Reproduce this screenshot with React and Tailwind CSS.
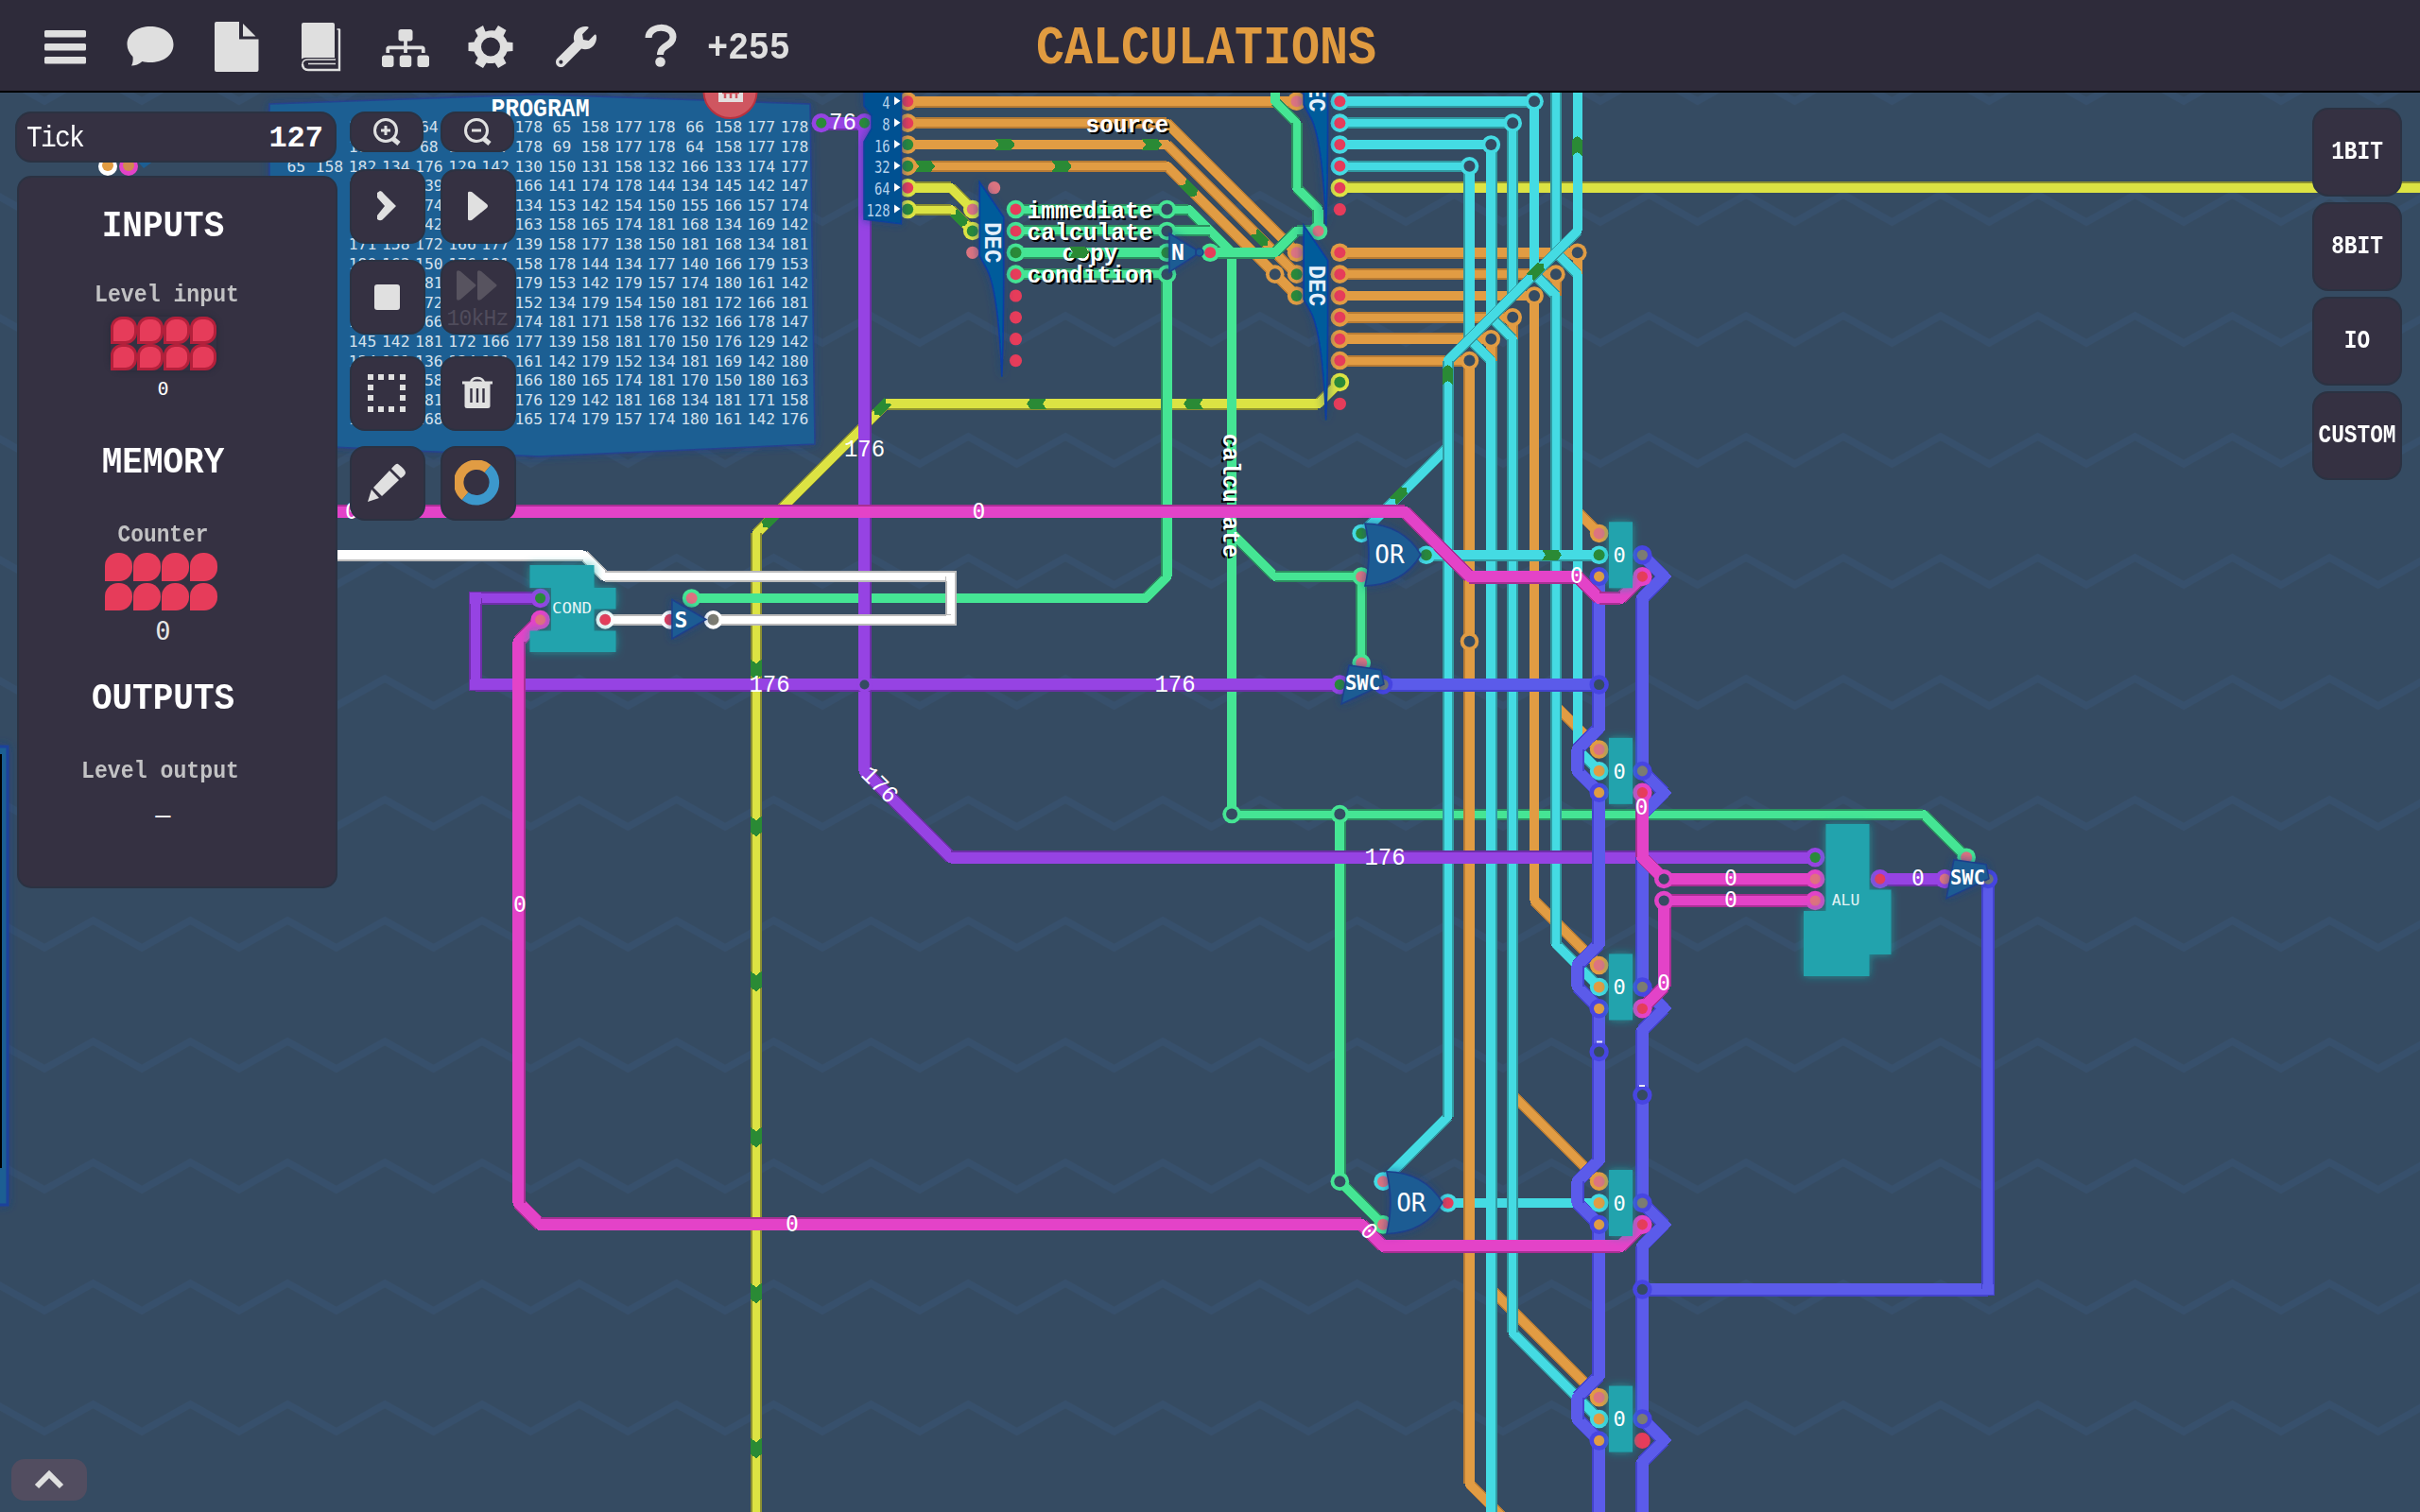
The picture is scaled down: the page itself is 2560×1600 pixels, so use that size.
import React from "react";
import { FaWrench, FaSitemap } from "react-icons/fa";

const U = 160 / 7;
const X = (g) => g * U + 0.2;
const Y = (g) => g * U - 7;

const C = {
  cyan: ["#44dbe3", "#319ba2"],
  orange: ["#e19c43", "#b87c35"],
  green: ["#45e594", "#2c8f60"],
  yellow: ["#dce343", "#8c9031"],
  pink: ["#e343c8", "#a72f93"],
  purple: ["#9643e3", "#6e2fa8"],
  indigo: ["#5b5bea", "#4343cc"],
  white: ["#ffffff", "#bbbbbb"],
};
const RING = { ...Object.fromEntries(Object.entries(C).map(([k, v]) => [k, v[0]])), indigo: "#4745e2" };
const CORE = { red: "#e63c5a", on: "#2a8a38", hole: "#354b62", in: "#dc7480", amber: "#e19c43", off: "#7c7c72", salmon: "#e07080" };
const BYTE = ["pink", "purple", "indigo"];

/* One straight run, with its edges snapped to a two pixel raster. */
function Run({ a, b, color, hf, hb }) {
  const vertical = a[0] === b[0];
  const c = vertical ? X(a[0]) : Y(a[1]);
  const s = vertical ? Y(Math.min(a[1], b[1])) : X(Math.min(a[0], b[0]));
  const e = vertical ? Y(Math.max(a[1], b[1])) : X(Math.max(a[0], b[0]));
  const strips = [];
  for (let p = 2 * Math.floor((c - hf) / 2) - 1; p <= c + hf; p += 2) {
    const d = Math.abs(p - c);
    if (d > hf) continue;
    const fill = d < hb ? C[color][0] : C[color][1];
    strips.push(
      vertical ? (
        <rect key={p} x={p - 1} y={s} width={2} height={e - s} fill={fill} />
      ) : (
        <rect key={p} x={s} y={p - 1} width={e - s} height={2} fill={fill} />
      )
    );
  }
  return <>{strips}</>;
}

const straight = (a, b) => a[0] === b[0] || a[1] === b[1];

function Wire({ c, p }) {
  const byte = BYTE.includes(c);
  const hf = byte ? 7 : 5.75;
  const hb = byte ? 5.9 : 4.55;
  const pts = p.map(([x, y]) => `${X(x)},${Y(y)}`).join(" ");
  const segs = p.slice(1).map((b, i) => [p[i], b]);
  const corners = p.slice(1, -1).filter((q, i) => straight(p[i], q) && straight(q, p[i + 2]));
  return (
    <g shapeRendering="crispEdges" fill="none" strokeMiterlimit="10">
      {segs
        .filter(([a, b]) => !straight(a, b))
        .map(([a, b], i) => (
          <line key={i} x1={X(a[0])} y1={Y(a[1])} x2={X(b[0])} y2={Y(b[1])} stroke={C[c][1]} strokeWidth={hf * 2} />
        ))}
      {corners.map(([x, y], i) => (
        <rect key={i} x={X(x) - hf} y={Y(y) - hf} width={hf * 2} height={hf * 2} fill={C[c][1]} />
      ))}
      <polyline points={pts} stroke={C[c][0]} strokeWidth={hb * 2} />
      {segs
        .filter(([a, b]) => straight(a, b))
        .map(([a, b], i) => (
          <Run key={i} a={a} b={b} color={c} hf={hf} hb={hb} />
        ))}
      {corners.map(([x, y], i) => (
        <rect key={i} x={X(x) - hb} y={Y(y) - hb} width={hb * 2} height={hb * 2} fill={C[c][0]} />
      ))}
    </g>
  );
}

const Ring = ({ c, k, x, y }) => (
  <g>
    <circle cx={X(x)} cy={Y(y)} r={BYTE.includes(c) ? 10.2 : 9.8} fill={RING[c]} />
    <circle cx={X(x)} cy={Y(y)} r={BYTE.includes(c) ? 5.6 : 6} fill={CORE[k]} />
  </g>
);
const Pin = ({ k, x, y, r = 6.6 }) => <circle cx={X(x)} cy={Y(y)} r={r} fill={CORE[k]} />;

const Pulse = ({ x, y, r = 0, w = 6 }) => (
  <path
    shapeRendering="crispEdges"
    d={`M-10,${-w} L7,${-w} L11,0 L7,${w} L-10,${w} L-6,0 Z`}
    fill="#2a8a35"
    transform={`translate(${x} ${y}) rotate(${r})`}
  />
);

function Txt({ x, y, s = 24, r = 0, w = 400, fill = "#fff", shadow, len, anchor = "middle", slab, children }) {
  return (
    <g transform={`translate(${x} ${y}) rotate(${r})${slab ? " scale(1 1.08)" : ""}`}>
      <text
        fontFamily={slab ? "'Liberation Mono', monospace" : "'DejaVu Sans Mono', monospace"}
        fontSize={s}
        fontWeight={w}
        textAnchor={anchor}
        y={s * (slab ? 0.33 : 0.36)}
        textLength={len}
        lengthAdjust={len ? "spacingAndGlyphs" : undefined}
        fill={fill}
        style={shadow ? { textShadow: "2px 2px 0 #000" } : undefined}
      >
        {children}
      </text>
    </g>
  );
}

const bitWires = [
  ["yellow", [[62, 9], [112, 9]]],
  ["yellow", [[62, 18], [61, 19], [41, 19], [35, 25], [35, 71]]],
  ["yellow", [[42, 9], [44, 9], [45, 10]]],
  ["yellow", [[42, 10], [44, 10], [45, 11]]],
  ["orange", [[42, 5], [60, 5]]],
  ["orange", [[42, 6], [54, 6], [60, 12]]],
  ["orange", [[42, 7], [54, 7], [60, 13]]],
  ["orange", [[42, 8], [54, 8], [60, 14]]],
  ["green", [[62, 38], [89, 38], [91, 40]]],
  ["green", [[54, 13], [54, 27], [53, 28], [32, 28]]],
  ["orange", [[62, 12], [73, 12], [73, 24], [74, 25]]],
  ["orange", [[62, 13], [72, 13], [72, 33], [74, 35]]],
  ["orange", [[62, 15], [70, 15], [70, 51], [74, 55]]],
  ["orange", [[62, 16], [69, 16], [69, 60], [74, 65]]],
  ["cyan", [[67, 56], [74, 56]]],
  ["orange", [[62, 14], [71, 14], [71, 42], [74, 45]]],
  ["orange", [[62, 17], [68, 17], [68, 69], [72, 73]]],
  ["cyan", [[62, 5], [71, 5]]],
  ["cyan", [[62, 6], [70, 6]]],
  ["cyan", [[62, 7], [69, 7]]],
  ["cyan", [[62, 8], [68, 8]]],
  ["cyan", [[68, 8], [68, 16], [69, 17], [69, 72]]],
  ["cyan", [[69, 7], [69, 15], [70, 16], [70, 62], [74, 66]]],
  ["cyan", [[70, 6], [70, 14]]],
  ["cyan", [[71, 5], [71, 13], [72, 14], [72, 44], [74, 46]]],
  ["cyan", [[72, 4], [72, 12], [73, 13], [73, 35], [74, 36]]],
  ["cyan", [[67, 21], [63, 25]]],
  ["cyan", [[73, 4], [73, 11], [67, 17], [67, 52], [64, 55]]],
  ["cyan", [[66, 26], [74, 26]]],
  ["green", [[47, 10], [55, 10], [57, 12]]],
  ["green", [[47, 11], [56, 11], [57, 12]]],
  ["green", [[47, 12], [54, 12]]],
  ["green", [[47, 13], [54, 13]]],
  ["green", [[59, 4], [59, 5], [60, 6], [60, 9], [61, 10], [61, 11]]],
  ["green", [[57, 25], [59, 27], [63, 27], [63, 31]]],
  ["green", [[57, 12], [57, 38], [62, 38]]],
  ["green", [[56, 12], [59, 12], [60, 11], [61, 11]]],
  ["green", [[62, 38], [62, 55], [64, 57]]],
];

const byteWires = [
  ["purple", [[38, 6], [40, 6], [40, 36], [44, 40], [84, 40]]],
  ["purple", [[25, 28], [22, 28], [22, 32], [62, 32]]],
  ["white", [[9, 26], [27, 26], [28, 27], [44, 27], [44, 29], [33, 29]]],
  ["white", [[28, 29], [31, 29]]],
  ["indigo", [[64, 32], [74, 32]]],
  ["indigo", [[74, 27], [74, 34], [73, 35], [73, 36], [74, 37], [74, 44], [73, 45], [73, 46], [74, 47], [74, 54], [73, 55], [73, 56], [74, 57], [74, 64], [73, 65], [73, 66], [74, 67], [74, 72]]],
  ["indigo", [[76, 26], [77, 27], [76, 28], [76, 36], [77, 37], [76, 38], [76, 46], [77, 47], [76, 48], [76, 56], [77, 57], [76, 58], [76, 66], [77, 67], [76, 68], [76, 72]]],
  ["indigo", [[76, 60], [92, 60], [92, 41]]],
  ["purple", [[87, 41], [90, 41]]],
  ["pink", [[9, 24], [65, 24], [68, 27], [73, 27], [74, 28], [75, 28], [76, 27]]],
  ["pink", [[25, 29], [24, 30], [24, 56], [25, 57], [63, 57], [64, 58], [75, 58], [76, 57]]],
  ["pink", [[76, 37], [76, 40], [77, 41], [84, 41]]],
  ["pink", [[76, 47], [77, 46], [77, 42], [84, 42]]],
];

const rings = [
  ["orange", "red", 42, 5], ["orange", "red", 42, 6], ["orange", "on", 42, 7], ["orange", "on", 42, 8],
  ["yellow", "red", 42, 9], ["yellow", "on", 42, 10], ["yellow", "in", 45, 10], ["yellow", "on", 45, 11],
  ["green", "red", 47, 10], ["green", "red", 47, 11], ["green", "on", 47, 12], ["green", "red", 47, 13],
  ["green", "hole", 54, 10], ["green", "hole", 54, 11], ["green", "on", 54, 12], ["green", "hole", 54, 13],
  ["green", "red", 56, 12], ["orange", "in", 60, 5], ["orange", "in", 60, 12], ["orange", "on", 60, 13],
  ["orange", "on", 60, 14], ["orange", "hole", 59, 13], ["green", "in", 61, 11],
  ["cyan", "red", 62, 5], ["cyan", "red", 62, 6], ["cyan", "red", 62, 7], ["cyan", "red", 62, 8],
  ["yellow", "red", 62, 9], ["cyan", "hole", 71, 5], ["cyan", "hole", 70, 6], ["cyan", "hole", 69, 7], ["cyan", "hole", 68, 8],
  ["orange", "red", 62, 12], ["orange", "red", 62, 13], ["orange", "red", 62, 14], ["orange", "red", 62, 15],
  ["orange", "red", 62, 16], ["orange", "red", 62, 17], ["yellow", "on", 62, 18],
  ["orange", "hole", 73, 12], ["orange", "hole", 72, 13], ["orange", "hole", 71, 14], ["orange", "hole", 70, 15],
  ["orange", "hole", 69, 16], ["orange", "hole", 68, 17], ["orange", "hole", 68, 30],
  ["cyan", "on", 63, 25], ["green", "in", 63, 27], ["cyan", "on", 66, 26], ["green", "in", 63, 31],
  ["green", "hole", 57, 38], ["green", "hole", 62, 38], ["green", "hole", 62, 55], ["cyan", "in", 64, 55],
  ["green", "in", 64, 57], ["cyan", "red", 67, 56], ["green", "in", 91, 40], ["green", "salmon", 32, 28],
  ["purple", "on", 38, 6], ["purple", "on", 40, 6], ["purple", "on", 25, 28], ["pink", "salmon", 25, 29],
  ["purple", "on", 84, 40], ["pink", "salmon", 84, 41], ["pink", "salmon", 84, 42], ["pink", "hole", 77, 41], ["pink", "hole", 77, 42],
  ["purple", "red", 87, 41], ["purple", "in", 90, 41], ["purple", "on", 62, 32], ["indigo", "off", 64, 32], ["indigo", "off", 92, 41],
  ["white", "red", 28, 29], ["white", "red", 31, 29], ["white", "off", 33, 29],
  ["indigo", "hole", 74, 32], ["indigo", "hole", 74, 49], ["indigo", "hole", 76, 51], ["indigo", "hole", 76, 60],
  ["cyan", "on", 74, 26],
  ...[25, 35, 45, 55, 65].map((g) => ["orange", "in", 74, g]),
  ...[36, 46, 56, 66].map((g) => ["cyan", "amber", 74, g]),
  ...[27, 37, 47, 57, 67].map((g) => ["indigo", "amber", 74, g]),
  ...[26, 36, 46, 56, 66].map((g) => ["indigo", "off", 76, g]),
  ...[27, 37, 47, 57].map((g) => ["pink", "red", 76, g]),
];

const pins = [
  ["in", 46, 9], ["in", 45, 12], ["red", 47, 14], ["red", 47, 15], ["red", 47, 16], ["red", 47, 17],
  ["red", 62, 10], ["red", 62, 19],
];

const pulses = [
  [1062.7, 153], [1218, 153], [978, 176], [1122.7, 176], [1258, 199.5, 45], [1333, 252, 45],
  [1668.5, 155, -90], [1625, 287, -45], [1531.5, 397, -90], [1480, 524, -45], [1641, 587.3],
  [1097, 427.3, 180], [1263, 427.3, 180], [933, 431, 135], [815, 550, 135], [1015, 231, 45],
  [800, 708, 90], [800, 874, 90], [800, 1038, 90], [800, 1203, 90], [800, 1368, 90], [800, 1532, 90],
];

/* The first two columns show only in the gap between the overlays. */
const memory = [
  "  177 178 64 158 177 178 65 158 177 178 66 158 177 178",
  "  177 178 68 158 177 178 69 158 177 178 64 158 177 178",
  "65 158 182 134 176 129 142 130 150 131 158 132 166 133 174 177",
  "  174 138 139 158 140 166 141 174 178 144 134 145 142 147",
  "  158 152 174 181 166 134 153 142 154 150 155 166 157 174",
  "  166 162 142 164 150 163 158 165 174 181 168 134 169 142",
  "  171 158 172 166 177 139 158 177 138 150 181 168 134 181",
  "  180 163 150 176 181 158 178 144 134 177 140 166 179 153",
  "  154 150 181 172 166 179 153 142 179 157 174 180 161 142",
  "  174 181 172 166 181 152 134 179 154 150 181 172 166 181",
  "  180 163 166 178 146 174 181 171 158 176 132 166 178 147",
  "  145 142 181 172 166 177 139 158 181 170 150 176 129 142",
  "  134 181 136 134 181 161 142 179 152 134 181 169 142 180",
  "  176 181 158 172 177 166 180 165 174 181 170 150 180 163",
  "  170 150 181 160 177 176 129 142 181 168 134 181 171 158",
  "  166 178 168 174 177 165 174 179 157 174 180 161 142 176",
].map((r) => r.split(" "));

function Decoder({ x, y }) {
  return (
    <g transform={`translate(${X(x)} ${Y(y)})`}>
      <path
        d="M7.5,-6 L33,31 L33,74 C33,120 33,160 31,200 C29,150 24,100 14,84 L7.5,72 Z"
        fill="#005b9b"
        stroke="#0b3ea2"
        strokeWidth="1.6"
        filter="url(#shade)"
      />
      <Txt x={22} y={58} s={24} r={90} fill="#e6f0fa" slab w={700}>DEC</Txt>
    </g>
  );
}

function OrGate({ dx = 0, dy = 0 }) {
  return (
    <g transform={`translate(${dx} ${dy})`}>
      <path
        d="M1444,554 C1475,555 1493,570 1503,587 C1493,604 1475,619 1444,620 Q1452,587 1444,554 Z"
        fill="#1c5c93"
        stroke="#1c3f8c"
        strokeWidth="1.6"
        filter="url(#shade)"
      />
      <Txt x={1470} y={586.5} s={26}>OR</Txt>
    </g>
  );
}

function Swc({ dx = 0, dy = 0 }) {
  return (
    <g transform={`translate(${dx} ${dy})`}>
      <path d="M1427,704 L1461,709 L1464,724 L1419,745 Z" fill="#1c5c93" stroke="#1c3f8c" strokeWidth="1.5" filter="url(#shade)" />
      <Txt x={1441.5} y={722.5} s={20.5} w={700}>SWC</Txt>
    </g>
  );
}

const Z = ({ x, y, r }) => <Txt x={x} y={y} r={r} s={23}>0</Txt>;

function Circuit() {
  return (
    <svg className="absolute inset-0 h-full w-full" viewBox="0 98 2560 1502">
      <defs>
        <pattern id="zig" x="47.1" y="206" width="102.86" height="128" patternUnits="userSpaceOnUse">
          <path d="M-51.4,0 L0,29 L51.4,0 L102.86,29 L154.3,0" fill="none" stroke="#37506c" strokeWidth="7.5" />
          <path d="M-51.4,128 L0,157 L51.4,128 L102.86,157 L154.3,128" fill="none" stroke="#37506c" strokeWidth="7.5" />
        </pattern>
        <filter id="shade" x="-50%" y="-50%" width="200%" height="200%">
          <feDropShadow dx="0" dy="0" stdDeviation="5" floodColor="#1f3f8a" floodOpacity="0.75" />
        </filter>
        <filter id="glow" x="-80%" y="-50%" width="260%" height="200%">
          <feDropShadow dx="0" dy="0" stdDeviation="5" floodColor="#1fa5a5" floodOpacity="0.8" />
        </filter>
      </defs>
      <rect x="0" y="98" width="2560" height="1502" fill="#354b62" />
      <rect x="0" y="98" width="2560" height="1502" fill="url(#zig)" />

      <path d="M285,110 L570,100 L857,110 L862,470 L570,483 L285,470 Z" fill="#1c5e93" stroke="#25428f" strokeWidth="1.5" filter="url(#shade)" />
      <Txt x={571.5} y={114} s={24.8} w={700} slab>PROGRAM</Txt>
      {memory.map((row, r) =>
        row.map((v, c) =>
          v ? (
            <Txt key={`${r}-${c}`} x={840.5 - 35.15 * (15 - c)} y={134.5 + r * 20.6} s={16.4} fill="#d3e0ec">
              {v}
            </Txt>
          ) : null
        )
      )}
      <circle cx="772.5" cy="97" r="28" fill="#cf5660" stroke="#b8323e" strokeWidth="2" />
      <path d="M760,96 H786 V108 H760 Z" fill="#e3dede" />
      <path d="M764,98 H782 M767,98 V104 M773,98 V104 M779,98 V104" stroke="#cf5660" strokeWidth="2.5" />

      <rect x="-20" y="790" width="28" height="485" fill="#1c5e93" stroke="#1e429b" strokeWidth="3" filter="url(#shade)" />
      <rect x="0" y="798" width="2" height="438" fill="#000" />
      <path d="M140,165 L170,165 L152,178 Z" fill="#1c5e93" />
      <circle cx="114" cy="176" r="10" fill="#fff" />
      <circle cx="114" cy="175" r="6" fill="#e19c43" />
      <circle cx="136" cy="176" r="10" fill="#e343c8" />
      <circle cx="136" cy="175" r="6" fill="#d08a50" />

      {bitWires.map(([c, p], i) => (
        <Wire key={i} c={c} p={p} />
      ))}
      {pulses.map(([x, y, r], i) => (
        <Pulse key={i} x={x} y={y} r={r} w={5.6} />
      ))}
      <Txt x={1302.5} y={524.5} shadow w={700} slab s={24.4} r={90}>calculate</Txt>
      {byteWires.map(([c, p], i) => (
        <Wire key={i} c={c} p={p} />
      ))}
      {rings.map(([c, k, x, y], i) => (
        <Ring key={i} c={c} k={k} x={x} y={y} />
      ))}
      <Pin k="red" x={76} y={67} r={8.5} />
      {pins.map(([k, x, y], i) => (
        <Pin key={i} k={k} x={x} y={y} />
      ))}
      <circle cx={X(40)} cy={Y(32)} r="8.5" fill="#9643e3" />
      <circle cx={X(40)} cy={Y(32)} r="5" fill="#354b62" />

      <path d="M914,90 H953.5 V237 L914,232 V150 L922,136 V122 L914,112 Z" fill="#015192" stroke="#0b419c" strokeWidth="1.5" filter="url(#shade)" />
      {["4", "8", "16", "32", "64", "128"].map((t, i) => (
        <g key={t}>
          <Txt x={941.5} y={Y(5 + i) + 1.5} s={17} len={t.length * 8.3} anchor="end" fill="#b5d2ec">{t}</Txt>
          <path d={`M946,${Y(5 + i) - 5} l6.5,4.5 l-6.5,4.5 Z`} fill="#fff" />
        </g>
      ))}
      <Decoder x={45} y={9} />
      <Decoder x={60} y={11} />
      <Decoder x={60} y={2} />
      <path d="M1237,247 L1265,264 V270 L1237,288 Z" fill="#1c5c93" stroke="#1c3f8c" strokeWidth="1.5" filter="url(#shade)" />
      <circle cx="1269" cy="267" r="4" fill="#1c5c93" stroke="#1c3f8c" strokeWidth="1.5" />
      <Txt x={1246} y={267} s={23} w={700}>N</Txt>
      <path d="M711,634.5 L747,655.5 L711,676 Z" fill="#1c5c93" stroke="#1c3f8c" strokeWidth="1.5" filter="url(#shade)" />
      <Txt x={720.5} y={655.5} s={23} w={700}>S</Txt>
      <OrGate />
      <OrGate dx={U} dy={30 * U} />
      <Swc />
      <Swc dx={28 * U} dy={9 * U} />

      {[26, 36, 46, 56, 66].map((g) => (
        <g key={g}>
          <rect x={1702} y={Y(g) - 35} width={25} height={70} fill="#20a3ad" filter="url(#glow)" />
          <Txt x={1713} y={Y(g)} s={22}>0</Txt>
        </g>
      ))}
      <path
        d="M560.500,598 H628.5 V622 H651.500 V644.5 H628.5 V667.5 H651.500 V690 H560.500 V667.5 H583 V622 H560.500 Z"
        fill="#20a3ad"
        filter="url(#glow)"
      />
      <Txt x={605} y={643.5} s={16} len={42} fill="#e4f4f5">COND</Txt>
      <path
        d="M1931.500,872 H1977.500 V941.5 H2000.500 V1010 H1977.500 V1033 H1908 V964 H1931.500 Z"
        fill="#20a3ad"
        filter="url(#glow)"
      />
      <Txt x={1952.5} y={952.5} s={16.3} fill="#e4f4f5">ALU</Txt>

      <Txt x={1192.5} y={131} shadow w={700} slab s={24.4}>source</Txt>
      <Txt x={1153} y={222} shadow w={700} slab s={24.6}>immediate</Txt>
      <Txt x={1153} y={245} shadow w={700} slab s={24.6}>calculate</Txt>
      <Txt x={1153} y={267.5} shadow w={700} slab s={24.6}>copy</Txt>
      <Txt x={1153} y={290.5} shadow w={700} slab s={24.6}>condition</Txt>
      <Pulse x={1141} y={267} />

      <Txt x={891.5} y={128} s={24} slab>76</Txt>
      <Txt x={914.5} y={474} slab>176</Txt>
      <Txt x={814} y={723} slab>176</Txt>
      <Txt x={1243} y={723} slab>176</Txt>
      <Txt x={931} y={830} slab r={45}>176</Txt>
      <Txt x={1465} y={906} slab>176</Txt>
      <Z x={372} y={540.5} />
      <Z x={1035.5} y={540.5} />
      <Z x={550} y={957} />
      <Z x={838} y={1294.5} />
      <Z x={1448.5} y={1302.5} r={45} />
      <Z x={1668} y={609} />
      <Z x={1736.5} y={854} />
      <Z x={1760} y={1040} />
      <Z x={1831} y={929} />
      <Z x={1831} y={952} />
      <Z x={2029} y={929} />
      <rect x="1689" y="1101.5" width="6" height="2" fill="#e8e8f8" />
      <rect x="1734" y="1148" width="6" height="2" fill="#e8e8f8" />
    </svg>
  );
}

function Icon({ children, w = 60, h = 60 }) {
  return (
    <span className="flex w-[90px] items-center justify-center">
      <svg width={w} height={h} viewBox={`0 0 ${w} ${h}`} fill="#dfdfdf">
        {children}
      </svg>
    </span>
  );
}

function Header() {
  return (
    <header className="grid h-[98px] shrink-0 grid-cols-[1064px_424px_1fr] items-center border-b-2 border-black bg-[#2e2b3a]">
      <nav className="flex items-center pt-[2px] pl-[24px] text-[#dfdfdf]">
        <Icon>
          <rect x="8" y="13" width="44" height="7.5" rx="1.5" />
          <rect x="8" y="27" width="44" height="7.5" rx="1.5" />
          <rect x="8" y="41" width="44" height="7.5" rx="1.5" />
        </Icon>
        <Icon>
          <path d="M30,9 C43,9 54.5,16 54.5,28 C54.5,40 43,47 30,47 C27,47 24,46.6 21.500,46 C18,49 14,50.500 10,50.500 C11.500,48 12,44 11.500,41 C8,37.500 5.500,33 5.500,28 C5.500,16 17,9 30,9 Z" />
        </Icon>
        <Icon>
          <path d="M9,4 H34 V22.500 H54.500 V55 Q54.500,57 52.500,57 H10 Q8,57 8,55 V6 Q8,4 10,4 Z" />
          <path d="M38,6 L51.500,19.500 H38 Z" />
        </Icon>
        <Icon>
          <path d="M12,5 H43 Q45,5 45,7 V42 H14 Q11.500,42 10,43.500 V7 Q10,5 12,5 Z" />
          <path d="M47.500,12 H50 V55 H17 Q11,55 11,49 Q11,44 17,44 H46 M17,48.500 H46" fill="none" stroke="#dfdfdf" strokeWidth="1.600" />
          <path d="M50,12 V55 H17 Q11.500,55 11,49" fill="none" stroke="#dfdfdf" strokeWidth="2.400" />
        </Icon>
        <span className="flex w-[90px] items-center justify-center pt-1">
          <FaSitemap className="h-[50px] w-[50px]" />
        </span>
        <Icon>
          <path
            fillRule="evenodd"
            d="M24.500,14.500 L22,8 L13.500,13 L16.500,19 Q13.500,22 12.500,25.500 L6.500,26 V35 L12.500,35.500 Q13.500,39 16.500,42 L13.500,48 L22,53 L25.500,47.500 Q30,48.500 34.500,47.500 L38,53 L46.500,48 L43.500,42 Q46.500,39 47.500,35.500 L53.500,35 V26 L47.500,25.500 Q46.500,22 43.500,19 L46.500,13 L38,8 L34.500,13.500 Q30,12.500 24.500,14.500 Z M30,20.500 A10,10 0 1 1 30,40.500 A10,10 0 1 1 30,20.500 Z"
          />
        </Icon>
        <span className="flex w-[90px] items-center justify-center">
          <FaWrench className="h-[43px] w-[43px]" />
        </span>
        <Icon>
          <path d="M17,21 C17,7 43,7 43,20 C43,30 29.500,28 29.500,39" fill="none" stroke="#dfdfdf" strokeWidth="7" />
          <circle cx="29.500" cy="46.500" r="5.300" />
        </Icon>
        <span className="scale-y-[1.1] pt-[5px] pl-[4px] font-['Liberation_Mono',monospace] text-[37px] leading-none font-bold tracking-[-0.3px]">+255</span>
      </nav>
      <h1 className="scale-y-[1.13] pt-[7px] text-center font-['Liberation_Mono',monospace] text-[50px] leading-none font-bold text-[#e09b40]">CALCULATIONS</h1>
      <div />
    </header>
  );
}

const surface = "border-2 border-[#2b3242] bg-[#353142]";

function Bits({ small }) {
  return (
    <div className={small ? "grid grid-cols-4 gap-x-px gap-y-[2px] pl-1" : "grid grid-cols-4 rounded-[12px] shadow-[0_0_6px_#252838]"}>
      {Array.from({ length: 8 }, (_, i) => (
        <span
          key={i}
          className={
            small
              ? "h-[29.5px] w-[29px] rounded-[14px] rounded-bl-none bg-[#e63c5a]"
              : "h-[28.5px] w-[28px] rounded-[12px] rounded-bl-none border-[3px] border-[#b4203b] bg-[#e63c5a]"
          }
        />
      ))}
    </div>
  );
}

const heading = "scale-y-[1.08] relative top-[3px] font-['Liberation_Mono',monospace] text-[36px] leading-[36px] font-bold text-white";
const caption = "scale-y-[1.1] font-['Liberation_Mono',monospace] font-bold leading-[28px] text-[#c2c2c4]";

function SidePanel() {
  return (
    <section className={`mt-[14px] ml-[2px] flex h-[754px] w-[339px] flex-col items-center rounded-[15px] pr-[30px] ${surface}`}>
      <h2 className={`mt-[31px] ${heading}`}>INPUTS</h2>
      <p className={`mt-[43px] pl-2 text-[23.2px] ${caption}`}>Level input</p>
      <div className="mt-[9px]"><Bits /></div>
      <p className="mt-[7px] font-['DejaVu_Sans_Mono',monospace] text-[20px] leading-[24px] text-white">0</p>
      <h2 className={`mt-[46px] ${heading}`}>MEMORY</h2>
      <p className={`mt-[47px] text-[22.8px] ${caption}`}>Counter</p>
      <div className="mt-[5px] pr-[8px]"><Bits small /></div>
      <p className="mt-[8px] font-['DejaVu_Sans_Mono',monospace] text-[27px] leading-[28px] text-[#e6e6e6]">0</p>
      <h2 className={`mt-[37px] ${heading}`}>OUTPUTS</h2>
      <p className={`mt-[47px] pr-[6px] text-[23.2px] ${caption}`}>Level output</p>
      <p className="mt-[20px] font-['DejaVu_Sans_Mono',monospace] text-[27px] leading-[24px] text-white">–</p>
    </section>
  );
}

function Tool({ short, children }) {
  return (
    <button
      className={
        short
          ? `flex h-[43px] w-[78px] items-center justify-center rounded-[16px] ${surface}`
          : `flex h-[79px] w-[80px] flex-col items-center justify-center rounded-[16px] pr-[2px] ${surface}`
      }
    >
      {children}
    </button>
  );
}

const Lens = ({ plus }) => (
  <svg width="36" height="36" viewBox="0 1 36 36" fill="none" stroke="#e0e0e0" strokeWidth="3">
    <circle cx="17" cy="17" r="11.5" />
    <path d="M25,26 L31,31" strokeWidth="5" />
    <path d={plus ? "M12,17 H22 M17,12 V22" : "M12,17 H22"} />
  </svg>
);

const dots = [0, 11, 22, 34].flatMap((x) => [[x, 0], [x, 34]]).concat([[0, 11], [0, 22], [34, 11], [34, 22]]);

function Tools() {
  return (
    <div className="mt-[20px] ml-[13px] grid h-fit grid-cols-[96px_80px] [grid-template-rows:60.5px_96.500px_101.500px_95px_79px]">
      <Tool short><Lens plus /></Tool>
      <Tool short><Lens /></Tool>
      <Tool>
        <svg width="24" height="34" viewBox="0 0 24 34" fill="#e0e0e0"><path d="M5,1 Q7,1 9,4 L22,17 L9,30 Q6,34 2,31 V27 L10,17 L2,8 V3 Z" /></svg>
      </Tool>
      <Tool>
        <svg width="26" height="34" viewBox="0 0 26 34" fill="#e0e0e0"><path d="M3,3 Q3,1 7,2 L23,15 Q25,17 23,19 L7,32 Q3,33 3,31 Z" /></svg>
      </Tool>
      <Tool><span className="h-[27px] w-[27px] rounded-[3px] bg-[#e0e0e0]" /></Tool>
      <Tool>
        <svg width="46" height="34" viewBox="0 0 46 34" fill="#57535f" className="mt-[8px] shrink-0">
          <path d="M1,3 Q1,0 5,2 L21,16 Q22,17 21,18 L5,32 Q1,34 1,31 Z" />
          <path d="M23,3 Q23,0 27,2 L43,16 Q44,17 43,18 L27,32 Q23,34 23,31 Z" />
        </svg>
        <span className="mt-[5px] font-['Liberation_Mono',monospace] text-[23px] leading-[28px] tracking-[-0.8px] text-[#504c5c]">10kHz</span>
      </Tool>
      <Tool>
        <svg width="40" height="40" viewBox="0 0 40 40" fill="#e0e0e0">
          {dots.map(([x, y]) => (
            <rect key={`${x}-${y}`} x={x} y={y} width="6" height="6" />
          ))}
        </svg>
      </Tool>
      <Tool>
        <svg width="32" height="36" viewBox="0 0 32 36">
          <path d="M9,7 Q10,2 16,2 Q22,2 23,7" fill="none" stroke="#e0e0e0" strokeWidth="2.4" />
          <path d="M0,5.500 H32 V8.500 H29.500 V32 Q29.500,34 27,34 H5 Q2.500,34 2.500,32 V8.500 H0 Z" fill="#e0e0e0" />
          <path d="M9.500,13 V28 M16,13 V28 M22.500,13 V28" stroke="#353142" strokeWidth="2.400" />
        </svg>
      </Tool>
      <Tool>
        <svg width="42" height="42" viewBox="0 0 42 42" fill="#e0e0e0">
          <path d="M24,8 L34,18 L16,35 L7,26 Z" />
          <path d="M5,28 L13,37 L1,41 Z" />
          <path d="M26,6 Q31,0 33,1 Q41,7 41,10 Q41,13 36,16 Z" />
        </svg>
      </Tool>
      <Tool>
        <svg width="48" height="48" viewBox="0 0 48 48" fill="none" strokeWidth="10.500">
          <path d="M11,38 A18,18 0 0 1 35,9" stroke="#e19c43" />
          <path d="M35,9 A18,18 0 1 1 11,38" stroke="#3c98cc" />
        </svg>
      </Tool>
    </div>
  );
}

export default function App() {
  return (
    <div className="flex h-[1600px] w-[2560px] flex-col overflow-hidden bg-[#354b62]">
      <Header />
      <main className="relative h-[1502px]">
        <Circuit />
        <div className="relative flex h-full">
          <div className="flex w-[357px] shrink-0 flex-col pl-[16px]">
            <div className={`mt-[20px] flex h-[54px] w-[340px] items-center justify-between rounded-[17px] px-[10px] ${surface}`}>
              <span className="scale-y-[1.1] pt-[3px] font-['Liberation_Mono',monospace] text-[28px] leading-none tracking-[-1.8px] text-white">Tick</span>
              <span className="pt-[3px] pr-[2px] font-['Liberation_Mono',monospace] text-[32px] leading-none font-bold text-white">127</span>
            </div>
            <SidePanel />
            <button className="mt-auto mb-[12px] ml-[-4px] flex h-[44px] w-[80px] items-center justify-center rounded-[14px] bg-[#524d60]">
              <svg width="32" height="22" viewBox="0 0 32 22" fill="none" stroke="#e0e0e0" strokeWidth="6">
                <path d="M3,18 L16,5 L29,18" />
              </svg>
            </button>
          </div>
          <Tools />
          <div className="mr-[19px] ml-auto mt-[16px] flex flex-col gap-[6px]">
            {["1BIT", "8BIT", "IO", "CUSTOM"].map((t) => (
              <button
                key={t}
                className={`h-[94px] w-[95px] rounded-[17px] text-center font-['Liberation_Mono',monospace] text-[22.8px] font-bold text-white ${surface}`}
              >
                <span className="flex scale-y-[1.18] justify-center">{t}</span>
              </button>
            ))}
          </div>
        </div>
      </main>
    </div>
  );
}
